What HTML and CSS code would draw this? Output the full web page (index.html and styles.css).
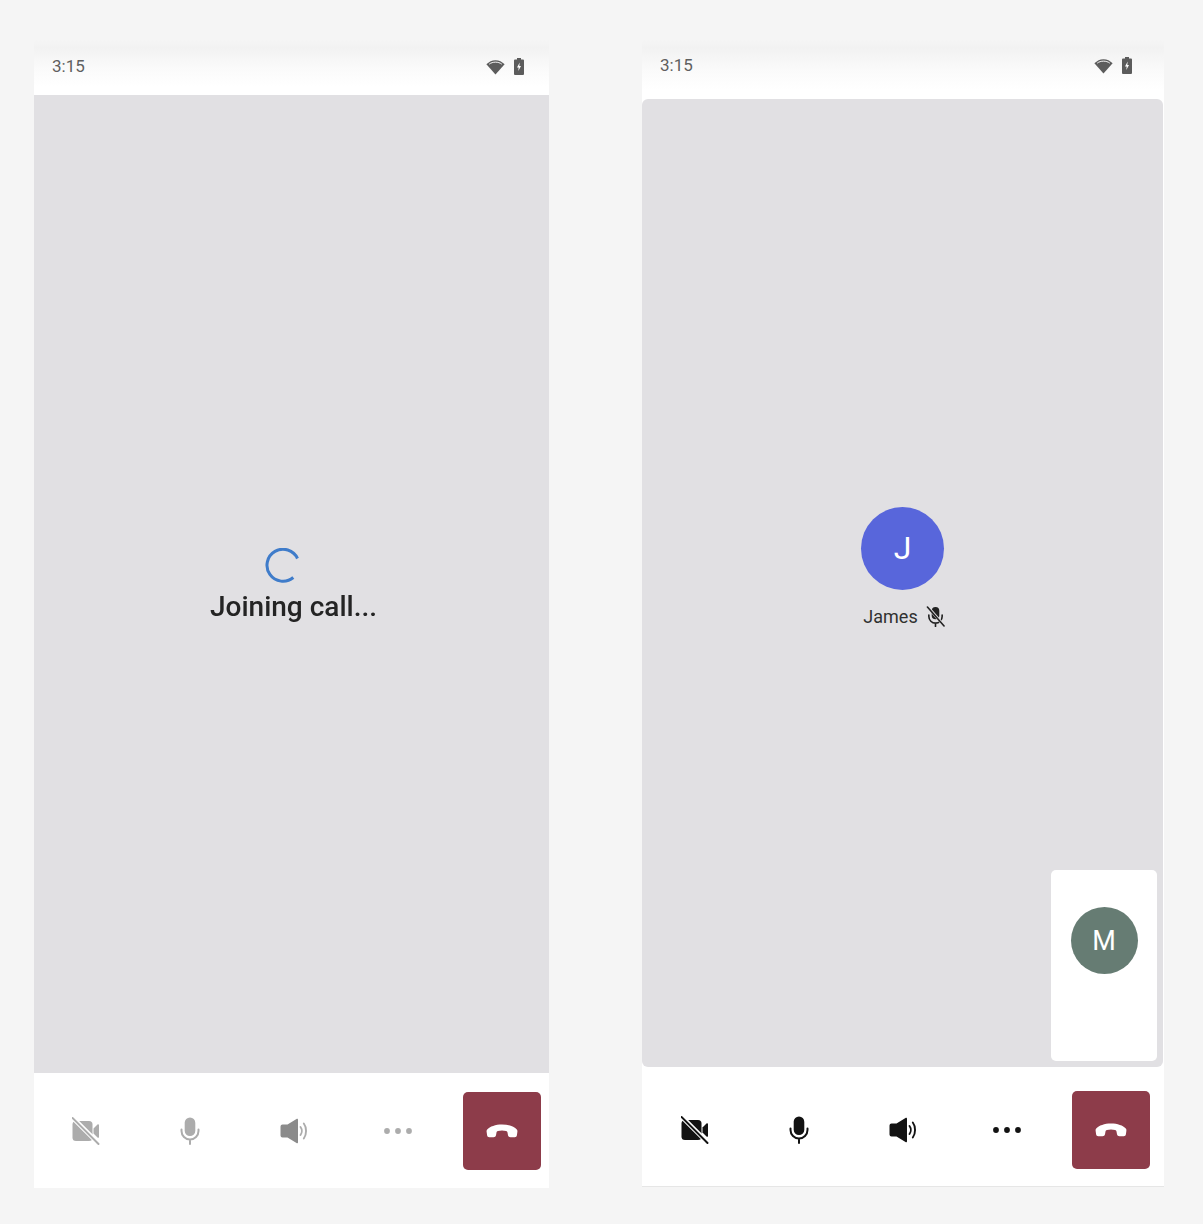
FILE: index.html
```html
<!DOCTYPE html>
<html lang="en">
<head>
    <meta charset="UTF-8">
    <meta name="viewport" content="width=device-width, initial-scale=1.0">
    <title>Video Call</title>
    <link rel="stylesheet" href="styles.css">
</head>
<body>
    <svg class="icon-defs" width="0" height="0" aria-hidden="true">
        <symbol id="i-wifi" viewBox="0 0 20 16">
            <path d="M10 16 0.4 5.2C3 2.4 6.300 0.800 10 0.800s7 1.600 9.600 4.400z" fill="currentColor"/>
            <path d="M3.400 5C5.200 3.600 7.500 2.900 10 2.900s4.800.7 6.600 2.100" fill="none" stroke="#fff" stroke-width="1"/>
        </symbol>
        <symbol id="i-battery" viewBox="0 0 10 17">
            <path d="M3 0h4v1.500h2a1 1 0 0 1 1 1V16a1 1 0 0 1-1 1H1a1 1 0 0 1-1-1V2.500a1 1 0 0 1 1-1h2z" fill="currentColor"/>
            <path d="M5.700 4.500 3 9.500h1.700L4.300 13 7 8H5.300z" fill="#fff"/>
        </symbol>
        <symbol id="i-video-off" viewBox="0 0 28 28">
            <rect x="0.500" y="4" width="20" height="20" rx="3.500" fill="currentColor"/>
            <path d="M21.500 11.500 25.500 7.500c.6-.6 1.500-.2 1.500.6v11.800c0 .8-.9 1.200-1.500.6l-4-4z" fill="currentColor"/>
            <path d="M0.500 0.500 27 27" stroke="#fff" stroke-width="4.500"/>
            <path d="M0.500 1 26.500 27" stroke="currentColor" stroke-width="1.900" stroke-linecap="round"/>
        </symbol>
        <symbol id="i-mic" viewBox="0 0 20 28">
            <rect x="4.700" y="0.500" width="10.600" height="18.500" rx="5.300" fill="currentColor"/>
            <path d="M1.500 12.500v1.500a8.500 8.500 0 0 0 17 0v-1.500M10 22.500V27" fill="none" stroke="currentColor" stroke-width="2" stroke-linecap="round"/>
        </symbol>
        <symbol id="i-speaker" viewBox="0 0 28 26">
            <path d="M2.500 6.500h5L16.500 1c.9-.6 1.500 0 1.500.8v22.400c0 .8-.6 1.400-1.500.8l-9-5.500h-5A2 2 0 0 1 .5 17.500v-9a2 2 0 0 1 2-2z" fill="var(--speaker, currentColor)"/>
            <path d="M20.500 9c1.700 2.200 1.700 5.800 0 8M23.800 5.500c3 3.900 3 11.100 0 15" fill="none" stroke="currentColor" stroke-width="1.900" stroke-linecap="round"/>
        </symbol>
        <symbol id="i-hangup" viewBox="0 0 32 14">
            <path d="M16 0.500C9.500.5 3.800 2.500 1.200 5.500c-.6.700-.7 1.400-.6 2.200l.5 3.500c.1 1.200 1 2 2.200 2h4.200c1.300 0 2.300-.8 2.500-2l.5-2.600c.1-.8.7-1.300 1.400-1.500 2.800-.7 5.400-.7 8.200 0 .7.200 1.300.7 1.400 1.500l.5 2.600c.2 1.200 1.200 2 2.500 2h4.200c1.200 0 2.100-.8 2.200-2l.5-3.500c.1-.8 0-1.500-.6-2.200C28.200 2.500 22.500.5 16 .5z" fill="currentColor"/>
        </symbol>
        <symbol id="i-more" viewBox="0 0 28 6">
            <circle cx="3" cy="3" r="2.900" fill="currentColor"/>
            <circle cx="14" cy="3" r="2.900" fill="currentColor"/>
            <circle cx="25" cy="3" r="2.900" fill="currentColor"/>
        </symbol>
    </svg>

    <div class="screens">
        <div class="phone phone-joining">
            <div class="status-bar">
                <span class="time">3:15</span>
                <div class="status-icons">
                    <svg class="icon-wifi"><use href="#i-wifi"/></svg>
                    <svg class="icon-battery"><use href="#i-battery"/></svg>
                </div>
            </div>
            <div class="stage">
                <div class="joining">
                    <svg class="spinner" viewBox="0 0 36 36">
                        <path d="M33.500 10.500A16 16 0 1 0 29.300 29.500" fill="none" stroke="#3f7cca" stroke-width="3"/>
                    </svg>
                    <div class="joining-text">Joining call...</div>
                </div>
            </div>
            <div class="toolbar toolbar-disabled">
                <button class="tool"><svg class="icon-video"><use href="#i-video-off"/></svg></button>
                <button class="tool"><svg class="icon-mic"><use href="#i-mic"/></svg></button>
                <button class="tool tool-speaker"><svg class="icon-speaker"><use href="#i-speaker"/></svg></button>
                <button class="tool"><svg class="icon-more"><use href="#i-more"/></svg></button>
                <button class="hangup"><svg class="icon-hangup"><use href="#i-hangup"/></svg></button>
            </div>
        </div>

        <div class="phone phone-call">
            <div class="status-bar">
                <span class="time">3:15</span>
                <div class="status-icons">
                    <svg class="icon-wifi"><use href="#i-wifi"/></svg>
                    <svg class="icon-battery"><use href="#i-battery"/></svg>
                </div>
            </div>
            <div class="stage">
                <div class="participant">
                    <div class="avatar avatar-james">J</div>
                    <div class="participant-name">
                        <span>James</span>
                        <svg class="icon-muted" viewBox="0 0 20 22">
                            <rect x="6" y="1" width="8" height="13" rx="4" fill="#222"/>
                            <path d="M3 9.500v1.500a7 7 0 0 0 14 0V9.500M10 18v3.500" fill="none" stroke="#222" stroke-width="1.700" stroke-linecap="round"/>
                            <path d="M1.500 0.500 19.500 21" stroke="#e1e0e3" stroke-width="3"/>
                            <path d="M1.500 1 19 21" stroke="#222" stroke-width="1.700" stroke-linecap="round"/>
                        </svg>
                    </div>
                </div>
                <div class="self-view">
                    <div class="avatar avatar-self">M</div>
                </div>
            </div>
            <div class="toolbar">
                <button class="tool"><svg class="icon-video"><use href="#i-video-off"/></svg></button>
                <button class="tool"><svg class="icon-mic"><use href="#i-mic"/></svg></button>
                <button class="tool"><svg class="icon-speaker"><use href="#i-speaker"/></svg></button>
                <button class="tool"><svg class="icon-more"><use href="#i-more"/></svg></button>
                <button class="hangup"><svg class="icon-hangup"><use href="#i-hangup"/></svg></button>
            </div>
        </div>
    </div>
</body>
</html>
```

FILE: styles.css
```css
html, body {
    height: 100%;
}

body {
    margin: 0;
    overflow: hidden;
    background-color: #f5f5f5;
    font-family: Roboto, "Liberation Sans", sans-serif;
}

.icon-defs {
    display: block;
    height: 0;
}

.screens {
    display: flex;
    gap: 93px;
    padding: 40px 0 0 34px;
    filter: blur(0.4px);
}

.phone {
    display: flex;
    flex-direction: column;
    background: #fff;
}

.phone-joining {
    width: 515px;
    height: 1148px;
}

.phone-call {
    width: 522px;
    height: 1147px;
    box-sizing: border-box;
    border-bottom: 1px solid #e6e6e6;
}

/* status bar */
.status-bar {
    display: flex;
    justify-content: space-between;
    align-items: flex-start;
    box-sizing: border-box;
    height: 55px;
    padding: 16px 25px 0 18px;
    background: linear-gradient(#f5f5f5, #f2f2f2 8px, #fafafa 50%, #fff 85%);
    color: #5c5c5c;
}

.phone-call .status-bar {
    height: 59px;
    padding-top: 15px;
    padding-right: 32px;
}

.time {
    font-size: 17px;
    line-height: 20px;
    color: #5f5f5f;
}

.status-icons {
    display: flex;
    align-items: center;
    gap: 9px;
    padding-top: 2px;
}

.icon-wifi {
    display: block;
    width: 19px;
    height: 16px;
}

.icon-battery {
    display: block;
    width: 10px;
    height: 17px;
}

/* main area */
.stage {
    position: relative;
    flex: 1;
    display: flex;
    align-items: center;
    justify-content: center;
    background-color: #e1e0e3;
}

.phone-call .stage {
    margin-right: 1px;
    border-radius: 6px;
}

.joining {
    display: flex;
    flex-direction: column;
    align-items: center;
    padding-top: 4px;
    padding-left: 4px;
}

.spinner {
    display: block;
    width: 36px;
    height: 36px;
    margin-right: 23px;
}

.joining-text {
    margin-top: 5px;
    font-size: 28px;
    font-weight: 500;
    line-height: 36px;
    color: #242424;
}

.participant {
    display: flex;
    flex-direction: column;
    align-items: center;
    padding-bottom: 31px;
}

.avatar {
    display: flex;
    align-items: center;
    justify-content: center;
    border-radius: 50%;
    color: #fff;
}

.avatar-james {
    width: 83px;
    height: 83px;
    background-color: #5866db;
    font-size: 32px;
}

.avatar-self {
    width: 67px;
    height: 67px;
    background-color: #667c73;
    font-size: 27px;
}

.participant-name {
    display: flex;
    align-items: center;
    gap: 8px;
    margin-top: 15px;
    margin-left: 3px;
    font-size: 18px;
    line-height: 24px;
    color: #303030;
}

.icon-muted {
    display: block;
    width: 19px;
    height: 21px;
}

.self-view {
    position: absolute;
    right: 6px;
    bottom: 6px;
    display: flex;
    justify-content: center;
    box-sizing: border-box;
    width: 106px;
    height: 191px;
    padding-top: 37px;
    background: #fff;
    border-radius: 5px;
}

/* call controls */
.toolbar {
    display: grid;
    grid-template-columns: repeat(4, 104px) 1fr;
    align-items: center;
    box-sizing: border-box;
    height: 115px;
    padding-top: 1px;
    color: #121212;
}

.phone-call .toolbar {
    height: 119px;
    padding-top: 7px;
    padding-left: 1px;
}

.toolbar-disabled {
    color: #acacac;
}

.tool {
    display: flex;
    align-items: center;
    justify-content: center;
    padding: 0;
    border: 0;
    background: none;
    color: inherit;
}

.tool-speaker {
    --speaker: #8b8b8b;
}

.icon-video {
    width: 28px;
    height: 28px;
}

.icon-mic {
    width: 20px;
    height: 28px;
}

.icon-speaker {
    width: 28px;
    height: 26px;
}

.icon-more {
    width: 28px;
    height: 6px;
}

.hangup {
    display: flex;
    align-items: center;
    justify-content: center;
    width: 78px;
    height: 78px;
    margin-left: 13px;
    padding: 0;
    border: 0;
    border-radius: 5px;
    background-color: #8d3c4a;
    color: #fff;
}

.icon-hangup {
    width: 32px;
    height: 14px;
}
```
